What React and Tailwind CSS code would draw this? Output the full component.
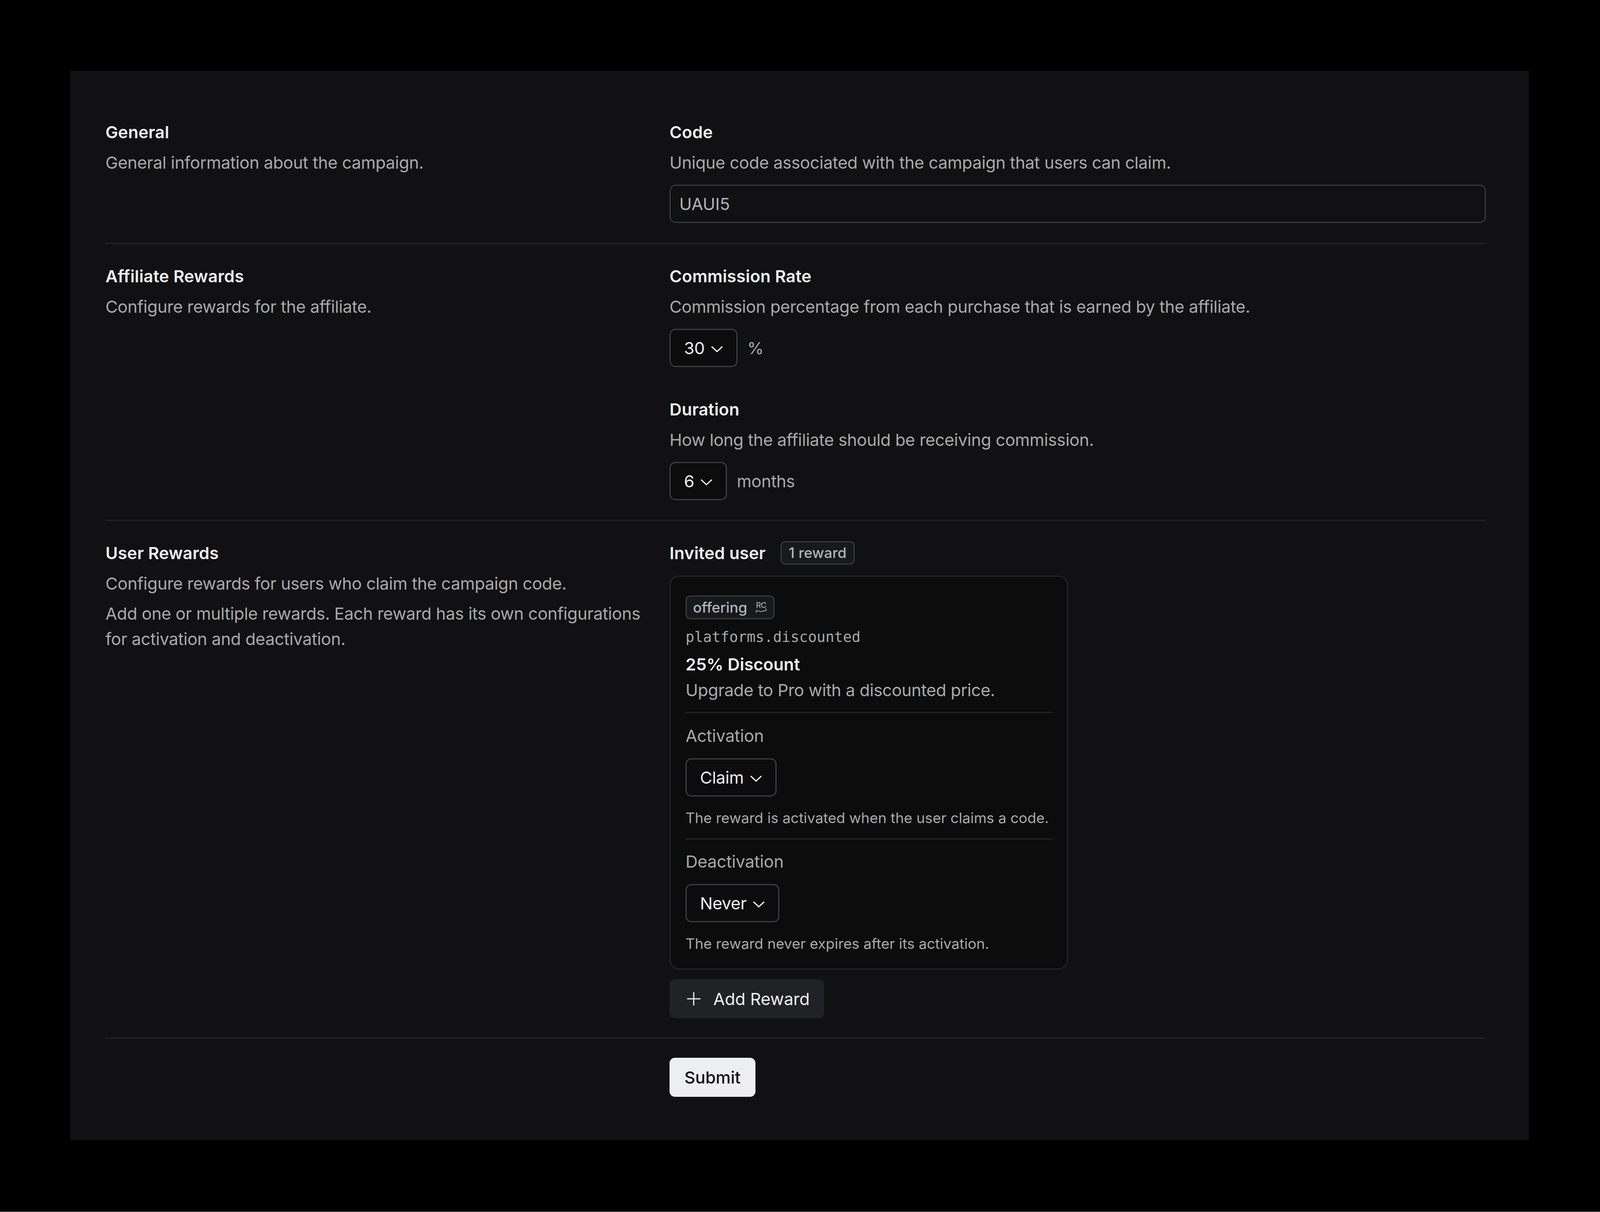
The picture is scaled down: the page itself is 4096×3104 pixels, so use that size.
import { useState } from "react";

// Radix style chevron, drawn filled
function Chevron() {
  return (
    <svg viewBox="0 0 9 9" className="w-[29px] h-[29px] text-[#edeef0]" fill="currentColor">
      <path d="M0.135232 3.15803C0.324102 2.95657 0.640521 2.94637 0.841971 3.13523L4.5 6.56464L8.158 3.13523C8.3595 2.94637 8.6759 2.95657 8.8648 3.15803C9.0536 3.35949 9.0434 3.67591 8.842 3.86477L4.84197 7.6148C4.64964 7.7951 4.35036 7.7951 4.15803 7.6148L0.158031 3.86477C-0.0434285 3.67591 -0.0536285 3.35949 0.135232 3.15803Z" />
    </svg>
  );
}

function RcLogo() {
  return (
    <span className="w-[29px] flex flex-col items-center text-[#a9a9a9]">
      <span className="text-[20px] leading-[17px] font-medium tracking-[-0.5px]">RC</span>
      <svg viewBox="0 0 29 10" className="w-[29px] h-[10px] overflow-visible" fill="none">
        <path d="M4 9C1 9 1 5 4 5C9 5 11 8 16 7C21 6 23 5 25 5C28 5 28 2 26 -1" stroke="currentColor" strokeWidth="2" />
      </svg>
    </span>
  );
}

function PlusIcon() {
  return (
    <svg viewBox="0 0 34 34" className="w-[34px] h-[34px]" stroke="#edeef0" strokeWidth="3" fill="none">
      <path d="M0 17H34M17 0V34" />
    </svg>
  );
}

function Select({ value }) {
  return (
    <button className="h-[98px] shrink-0 flex items-center gap-[17px] pl-[34px] pr-[35px] rounded-[15px] border-[3px] border-[#3b3f45] bg-[#0c0c0d] text-[#edeef0] text-[43px] leading-[62px] tracking-[-0.4px]">
      <span>{value}</span>
      <Chevron />
    </button>
  );
}

function Title({ children }) {
  return <div className="text-[#edeef0] text-[43px] leading-[62px] font-semibold tracking-[0.15px]">{children}</div>;
}

function Desc({ children, className = "" }) {
  return <div className={`text-[#a9a9a9] text-[43px] leading-[62px] tracking-[-0.4px] ${className}`}>{children}</div>;
}

function Divider() {
  return <div className="h-[3px] bg-[#222427]" />;
}

function Section({ title, left, pb, children }) {
  return (
    <div className={`flex pt-[51px] ${pb}`}>
      <div className="w-[1444px] pr-[60px] shrink-0">
        <Title>{title}</Title>
        {left}
      </div>
      <div className="flex-1">{children}</div>
    </div>
  );
}

function Trigger({ title, desc, value, unit }) {
  return (
    <div>
      <Title>{title}</Title>
      <Desc className="mt-[16px]">{desc}</Desc>
      <div className="mt-[26px] flex items-center gap-[25px]">
        <Select value={value} />
        <span className="text-[#a9a9a9] text-[43px] tracking-[-0.4px]">{unit}</span>
      </div>
    </div>
  );
}

function RewardOption({ label, value, help }) {
  return (
    <div>
      <div className="text-[#a9a9a9] text-[43px] leading-[62px] tracking-[-0.2px]">{label}</div>
      <div className="mt-[27px] flex">
        <Select value={value} />
      </div>
      <div className="mt-[31px] text-[#a9a9a9] text-[37px] leading-[48px]">{help}</div>
    </div>
  );
}

export default function App() {
  const [code] = useState("UAUI5");

  return (
    <div className="w-[4096px] h-[3104px] bg-black flex flex-col font-['Inter',sans-serif]">
      <div className="flex-1 pt-[181px] pl-[180px] pr-[182px]">
        <div className="h-[2739px] bg-[#111113] pl-[90px] pr-[110px] pt-[126px]">
          {/* General */}
          <div className="flex pb-[51px]">
            <div className="w-[1444px] pr-[60px] shrink-0">
              <Title>General</Title>
              <Desc className="mt-[16px]">General information about the campaign.</Desc>
            </div>
            <div className="flex-1">
              <Title>Code</Title>
              <Desc className="mt-[16px]">Unique code associated with the campaign that users can claim.</Desc>
              <div className="mt-[26px] h-[98px] flex items-center pl-[22px] rounded-[15px] border-[3px] border-[#363a3f] text-[#b0b4ba] text-[43px]">
                {code}
              </div>
            </div>
          </div>
          <Divider />

          {/* Affiliate Rewards */}
          <Section
            title="Affiliate Rewards"
            pb="pb-[50px]"
            left={<Desc className="mt-[16px]">Configure rewards for the affiliate.</Desc>}
          >
            <Trigger
              title="Commission Rate"
              desc="Commission percentage from each purchase that is earned by the affiliate."
              value="30"
              unit="%"
            />
            <div className="mt-[77px]">
              <Trigger
                title="Duration"
                desc="How long the affiliate should be receiving commission."
                value="6"
                unit="months"
              />
            </div>
          </Section>
          <Divider />

          {/* User Rewards */}
          <Section
            title="User Rewards"
            pb="pb-[49px]"
            left={
              <>
                <Desc className="mt-[16px]">Configure rewards for users who claim the campaign code.</Desc>
                <div className="mt-[14px] text-[#a9a9a9] text-[43px] leading-[65px] tracking-[-0.4px]">
                  Add one or multiple rewards. Each reward has its own configurations for activation and deactivation.
                </div>
              </>
            }
          >
            <div className="flex items-center gap-[38px] h-[62px]">
              <Title>Invited user</Title>
              <span className="h-[60px] flex items-center px-[18px] rounded-[12px] border-[3px] border-[#363a3f] bg-[#18191b] text-[#b0b4ba] text-[37px] font-medium">
                1 reward
              </span>
            </div>

            <div className="mt-[27px] w-[1020px] h-[1009px] rounded-[24px] border-[3px] border-[#222427] bg-[#0c0c0d] pt-[48px] pl-[38px] pr-[36px]">
              <span className="h-[61px] inline-flex items-center gap-[21px] pl-[16px] pr-[17px] rounded-[12px] border-[3px] border-[#363a3f] bg-[#18191b] text-[#b0b4ba] text-[37px] font-medium">
                offering
                <RcLogo />
              </span>
              <div className="mt-[21px] font-['DejaVu_Sans_Mono',monospace] text-[37.2px] leading-[49px] text-[#a9a9a9]">
                platforms.discounted
              </div>
              <div className="mt-[14px] text-[#edeef0] text-[43px] leading-[62px] font-semibold">25% Discount</div>
              <div className="mt-[4px] text-[#a9a9a9] text-[43px] leading-[62px] tracking-[-0.4px]">Upgrade to Pro with a discounted price.</div>
              <div className="mt-[25px] mb-[27px]">
                <Divider />
              </div>
              <RewardOption
                label="Activation"
                value="Claim"
                help="The reward is activated when the user claims a code."
              />
              <div className="mt-[28px] mb-[25px]">
                <Divider />
              </div>
              <RewardOption
                label="Deactivation"
                value="Never"
                help="The reward never expires after its activation."
              />
            </div>

            <button className="mt-[25px] h-[100px] flex items-center gap-[33px] pl-[45px] pr-[37px] rounded-[14px] bg-[#212226] text-[#edeef0] text-[43px]">
              <PlusIcon />
              Add Reward
            </button>
          </Section>
          <Divider />

          {/* Submit */}
          <div className="pt-[49px] pl-[1444px]">
            <button className="h-[100px] px-[38px] rounded-[14px] bg-[#edeef0] text-[#111113] text-[43px] font-medium">
              Submit
            </button>
          </div>
        </div>
      </div>
      <div className="h-px bg-[#9a9a9a]" />
    </div>
  );
}
